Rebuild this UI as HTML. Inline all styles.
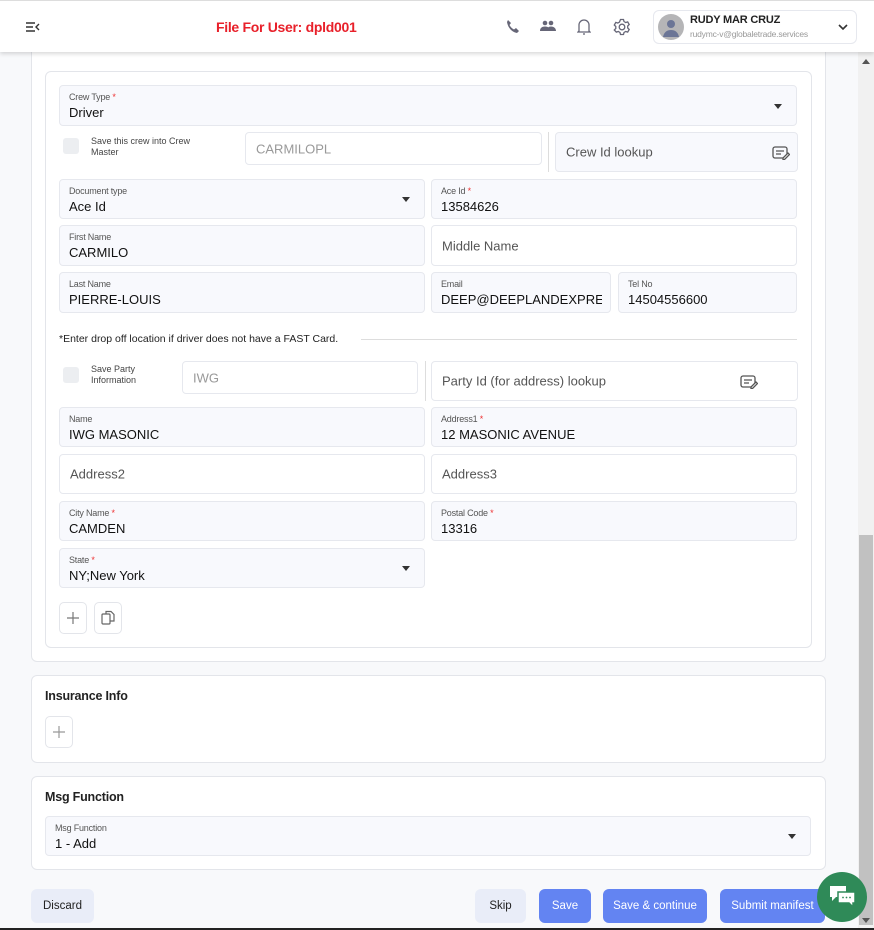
<!DOCTYPE html>
<html><head><meta charset="utf-8"><style>
*{box-sizing:border-box;margin:0;padding:0}
body{width:874px;height:930px;overflow:hidden;background:#f8f9fb;font-family:"Liberation Sans",sans-serif;position:relative;color:#111}
.a{position:absolute}
.card{position:absolute;background:#fff;border:1px solid #e3e5ea;border-radius:6px}
.f{position:absolute;background:#f8f9fd;border:1px solid #e6e8ee;border-radius:4px}
.f.w{background:#fff}
.f .l{position:absolute;left:9px;top:6px;font-size:9px;color:#555;letter-spacing:-.2px}
.f .l i{color:#e33;font-style:normal}
.f .v{position:absolute;left:9px;top:19px;font-size:13px;color:#111;white-space:nowrap;overflow:hidden;right:8px}
.f .p{position:absolute;left:10px;top:50%;transform:translateY(-50%);font-size:13px;color:#777}
.car{position:absolute;right:14px;top:50%;margin-top:-2px;width:0;height:0;border-left:4px solid transparent;border-right:4px solid transparent;border-top:5px solid #333}
.cb{position:absolute;width:16px;height:16px;background:#eceef1;border-radius:3px}
.sm{position:absolute;font-size:9px;color:#444;line-height:11px}
.btn{position:absolute;border-radius:6px;font-size:11.5px;display:flex;align-items:center;justify-content:center}
.blue{background:#6384f2;color:#fff}
.ib{position:absolute;width:28px;height:32px;border:1px solid #e3e5ea;border-radius:5px;background:#fff;display:flex;align-items:center;justify-content:center}
h3{position:absolute;font-size:12.5px;font-weight:bold;color:#222;letter-spacing:-.2px}
</style></head><body>

<div class="a" style="left:45px;top:50px;width:195px;height:8px;border:1px solid #e3e5ea;border-top:none;border-radius:0 0 4px 4px;background:#fff"></div>
<div class="a" style="left:45px;top:50px;width:135px;height:8px;background:#eef0f4"></div>

<div class="card" style="left:31px;top:40px;width:795px;height:622px;border-top:none"></div>
<div class="card" style="left:45px;top:71px;width:767px;height:577px"></div>

<div class="f" style="left:59px;top:85px;width:738px;height:41px"><div class="l">Crew Type <i>*</i></div><div class="v">Driver</div><div class="car"></div></div>

<div class="cb" style="left:63px;top:138px"></div>
<div class="sm" style="left:91px;top:136px">Save this crew into Crew<br>Master</div>
<div class="f w" style="left:245px;top:132px;width:297px;height:33px"><div class="p" style="color:#999">CARMILOPL</div></div>
<div class="a" style="left:548px;top:132px;width:1px;height:40px;background:#ddd"></div>
<div class="f" style="left:555px;top:132px;width:243px;height:40px"><div class="p" style="color:#555">Crew Id lookup</div>
<svg class="a" style="left:216px;top:13px" width="18" height="14" viewBox="0 0 18 14" fill="none" stroke="#555" stroke-width="1.3"><rect x="1" y="1" width="14" height="11" rx="2"/><path d="M4 5h8M4 8h5"/><path d="M11 12l5-5 1.5 1.5-5 5H11z" fill="#fff"/></svg></div>

<div class="f" style="left:59px;top:179px;width:366px;height:40px"><div class="l">Document type</div><div class="v">Ace Id</div><div class="car"></div></div>
<div class="f" style="left:431px;top:179px;width:366px;height:40px"><div class="l">Ace Id <i>*</i></div><div class="v">13584626</div></div>

<div class="f" style="left:59px;top:225px;width:366px;height:41px"><div class="l">First Name</div><div class="v">CARMILO</div></div>
<div class="f w" style="left:431px;top:225px;width:366px;height:41px"><div class="p" style="color:#555">Middle Name</div></div>

<div class="f" style="left:59px;top:272px;width:366px;height:41px"><div class="l">Last Name</div><div class="v">PIERRE-LOUIS</div></div>
<div class="f" style="left:431px;top:272px;width:180px;height:41px"><div class="l">Email</div><div class="v">DEEP@DEEPLANDEXPRESS</div></div>
<div class="f" style="left:618px;top:272px;width:179px;height:41px"><div class="l">Tel No</div><div class="v">14504556600</div></div>

<div class="a" style="left:59px;top:333px;font-size:10.5px;color:#222">*Enter drop off location if driver does not have a FAST Card.</div>
<div class="a" style="left:361px;top:339px;width:436px;height:1px;background:#ddd"></div>

<div class="cb" style="left:63px;top:367px"></div>
<div class="sm" style="left:91px;top:364px">Save Party<br>Information</div>
<div class="f w" style="left:182px;top:361px;width:236px;height:33px"><div class="p" style="color:#999">IWG</div></div>
<div class="a" style="left:425px;top:361px;width:1px;height:40px;background:#ddd"></div>
<div class="f w" style="left:431px;top:361px;width:367px;height:40px"><div class="p" style="color:#555">Party Id (for address) lookup</div>
<svg class="a" style="left:308px;top:13px" width="18" height="14" viewBox="0 0 18 14" fill="none" stroke="#555" stroke-width="1.3"><rect x="1" y="1" width="14" height="11" rx="2"/><path d="M4 5h8M4 8h5"/><path d="M11 12l5-5 1.5 1.5-5 5H11z" fill="#fff"/></svg></div>

<div class="f" style="left:59px;top:407px;width:366px;height:40px"><div class="l">Name</div><div class="v">IWG MASONIC</div></div>
<div class="f" style="left:431px;top:407px;width:366px;height:40px"><div class="l">Address1 <i>*</i></div><div class="v">12 MASONIC AVENUE</div></div>

<div class="f w" style="left:59px;top:454px;width:366px;height:40px"><div class="p" style="color:#555">Address2</div></div>
<div class="f w" style="left:431px;top:454px;width:366px;height:40px"><div class="p" style="color:#555">Address3</div></div>

<div class="f" style="left:59px;top:501px;width:366px;height:40px"><div class="l">City Name <i>*</i></div><div class="v">CAMDEN</div></div>
<div class="f" style="left:431px;top:501px;width:366px;height:40px"><div class="l">Postal Code <i>*</i></div><div class="v">13316</div></div>

<div class="f" style="left:59px;top:548px;width:366px;height:40px"><div class="l">State <i>*</i></div><div class="v">NY;New York</div><div class="car"></div></div>

<div class="ib" style="left:59px;top:602px"><svg width="14" height="14"><path d="M7 1v12M1 7h12" stroke="#777" stroke-width="1.2"/></svg></div>
<div class="ib" style="left:94px;top:602px"><svg width="14" height="16" fill="none" stroke="#666" stroke-width="1.2"><rect x="1" y="4" width="8" height="10" rx="1"/><path d="M5 4V1.5h5l3 3V11H9"/></svg></div>

<div class="card" style="left:31px;top:675px;width:795px;height:88px"></div>
<h3 style="left:45px;top:689px">Insurance Info</h3>
<div class="ib" style="left:45px;top:716px"><svg width="14" height="14"><path d="M7 1v12M1 7h12" stroke="#999" stroke-width="1.2"/></svg></div>

<div class="card" style="left:31px;top:776px;width:795px;height:94px"></div>
<h3 style="left:45px;top:790px">Msg Function</h3>
<div class="f" style="left:45px;top:816px;width:766px;height:40px"><div class="l">Msg Function</div><div class="v">1 - Add</div><div class="car"></div></div>

<div class="btn" style="left:31px;top:889px;width:63px;height:34px;background:#e9edf8;color:#222">Discard</div>
<div class="btn" style="left:475px;top:889px;width:51px;height:34px;background:#e9edf8;color:#222">Skip</div>
<div class="btn blue" style="left:539px;top:889px;width:52px;height:34px">Save</div>
<div class="btn blue" style="left:603px;top:889px;width:104px;height:34px">Save &amp; continue</div>
<div class="btn blue" style="left:720px;top:889px;width:105px;height:34px">Submit manifest</div>

<div class="a" style="left:858px;top:52px;width:16px;height:878px;background:#f1f1f1"></div>
<div class="a" style="left:859px;top:535px;width:14px;height:390px;background:#c1c1c1"></div>
<div class="a" style="left:862px;top:59px;border-left:4px solid transparent;border-right:4px solid transparent;border-bottom:5px solid #555"></div>
<div class="a" style="left:862px;top:918px;border-left:4px solid transparent;border-right:4px solid transparent;border-top:5px solid #555"></div>
<div class="a" style="left:0;top:928px;width:874px;height:2px;background:#222"></div>

<div class="a" style="left:817px;top:872px;width:50px;height:50px;border-radius:50%;background:#2f8a58"></div>
<svg class="a" style="left:828px;top:883px" width="30" height="28" viewBox="0 0 30 28"><path d="M2 3h16v11H8l-4 4v-4H2z" fill="#fff"/><path d="M10 9h17v11h-2v4l-4-4H10z" fill="#fff" stroke="#2f8a58" stroke-width="1.5"/><circle cx="15" cy="14.5" r=".9" fill="#2f8a58"/><circle cx="18.5" cy="14.5" r=".9" fill="#2f8a58"/><circle cx="22" cy="14.5" r=".9" fill="#2f8a58"/></svg>

<div class="a" style="left:0;top:0;width:874px;height:52px;background:#fff;box-shadow:0 2px 4px rgba(0,0,0,.15);border-top:1px solid #ddd"></div>
<svg class="a" style="left:26px;top:22px" width="14" height="10"><path d="M0 1h9M0 5h7M0 9h9M13 2l-3 3 3 3" stroke="#333" stroke-width="1.4" fill="none"/></svg>
<div class="a" style="left:216px;top:19px;font-size:14px;font-weight:bold;color:#e8202a;letter-spacing:-.3px">File For User: dpld001</div>
<svg class="a" style="left:505px;top:19px" width="16" height="16" viewBox="0 0 16 16"><path d="M3 1l3 3-1.5 2c1 2 2.5 3.5 4.5 4.5L11 9l3 3-2 2C7 13 3 9 2 3z" fill="#667"/></svg>
<svg class="a" style="left:540px;top:20px" width="16" height="12" viewBox="0 0 16 12"><circle cx="5" cy="3" r="2.3" fill="#667"/><circle cx="11" cy="3" r="2.3" fill="#667"/><path d="M0 11c0-3 2-4.5 5-4.5s5 1.5 5 4.5zM7 11c0-3 1.5-4.5 4-4.5s5 1.5 5 4.5z" fill="#667"/></svg>
<svg class="a" style="left:577px;top:18px" width="14" height="18" viewBox="0 0 14 18" fill="none" stroke="#667" stroke-width="1.3"><path d="M2 13V7a5 5 0 0110 0v6l1 1H1z"/><path d="M6 16h2"/></svg>
<svg class="a" style="left:613px;top:18px" width="18" height="18" viewBox="0 0 18 18" fill="none" stroke="#667" stroke-width="1.3"><circle cx="9" cy="9" r="2.8"/><path d="M7.5 1.5h3l.5 2 1.7 1 2-.6 1.5 2.6-1.5 1.5v2l1.5 1.5-1.5 2.6-2-.6-1.7 1-.5 2h-3l-.5-2-1.7-1-2 .6L1.3 12l1.5-1.5v-2L1.3 7l1.5-2.6 2 .6 1.7-1z"/></svg>
<div class="a" style="left:653px;top:10px;width:204px;height:34px;border:1px solid #e6e8ee;border-radius:6px;background:#fff"></div>
<div class="a" style="left:658px;top:14px;width:26px;height:26px;border-radius:50%;background:#b5b5b7;overflow:hidden"><svg width="26" height="26"><circle cx="13" cy="10" r="4" fill="#6b7596"/><path d="M5 23c1-5 4-7 8-7s7 2 8 7z" fill="#6b7596"/></svg></div>
<div class="a" style="left:690px;top:14px;font-size:11px;font-weight:bold;color:#222;letter-spacing:-.2px">RUDY MAR CRUZ</div>
<div class="a" style="left:690px;top:29px;font-size:8.5px;color:#999;letter-spacing:-.2px">rudymc-v@globaletrade.services</div>
<svg class="a" style="left:838px;top:24px" width="10" height="7"><path d="M1 1l4 4 4-4" stroke="#333" stroke-width="1.6" fill="none"/></svg>
</body></html>
